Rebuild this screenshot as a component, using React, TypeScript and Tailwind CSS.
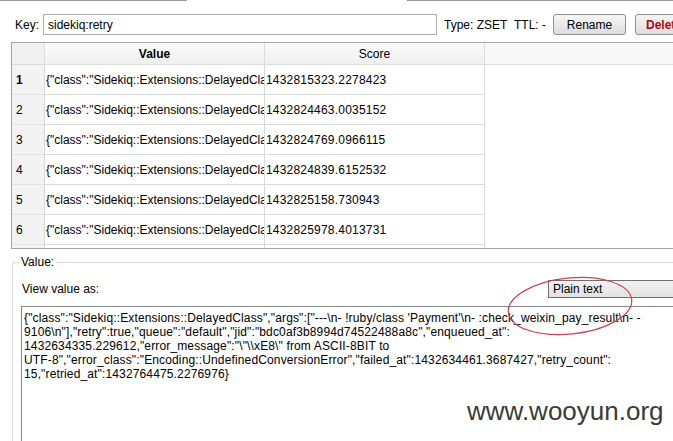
import React from "react";

const rows = [
  { n: "1", v: '{"class":"Sidekiq::Extensions::DelayedClass","args"', s: "1432815323.2278423" },
  { n: "2", v: '{"class":"Sidekiq::Extensions::DelayedClass","args"', s: "1432824463.0035152" },
  { n: "3", v: '{"class":"Sidekiq::Extensions::DelayedClass","args"', s: "1432824769.0966115" },
  { n: "4", v: '{"class":"Sidekiq::Extensions::DelayedClass","args"', s: "1432824839.6152532" },
  { n: "5", v: '{"class":"Sidekiq::Extensions::DelayedClass","args"', s: "1432825158.730943" },
  { n: "6", v: '{"class":"Sidekiq::Extensions::DelayedClass","args"', s: "1432825978.4013731" },
  { n: "7", v: '{"class":"Sidekiq::Extensions::DelayedClass","args"', s: "1432826102.1122334" },
];

const lines = [
  `{"class":"Sidekiq::Extensions::DelayedClass","args":["---\\n- !ruby/class 'Payment'\\n- :check_weixin_pay_result\\n- -`,
  `9106\\n"],"retry":true,"queue":"default","jid":"bdc0af3b8994d74522488a8c","enqueued_at":`,
  `1432634335.229612,"error_message":"\\"\\\\xE8\\" from ASCII-8BIT to`,
  `UTF-8","error_class":"Encoding::UndefinedConversionError","failed_at":1432634461.3687427,"retry_count":`,
  `15,"retried_at":1432764475.2276976}`,
];

export default function App() {
  return (
    <div className="relative w-[673px] h-[441px] overflow-hidden bg-white text-[12px] text-black font-['Liberation_Sans',Arial,sans-serif]">
      {/* top tab frame lines */}
      <div className="flex h-[2px]">
        <div className="w-[187px] border-t border-[#9a9a9a]" />
        <div className="w-[220px]" />
        <div className="flex-1 border-t border-[#9a9a9a]" />
      </div>

      {/* key row */}
      <div className="mt-[12px] flex h-[21px] items-center whitespace-nowrap">
        <div className="w-[43px] shrink-0 pl-[15px]">Key:</div>
        <div className="flex h-[21px] w-[394px] shrink-0 items-center border border-[#abadb3] pl-[4px]">sidekiq:retry</div>
        <div className="ml-[7px] w-[109px] shrink-0">Type: ZSET&nbsp;&nbsp;TTL: -</div>
        <button className="flex h-[21px] w-[73px] shrink-0 items-center justify-center rounded-[3px] border border-[#8e8f8f] bg-gradient-to-b from-[#f6f6f6] to-[#dddddd]">
          Rename
        </button>
        <button className="ml-[9px] flex h-[21px] w-[73px] shrink-0 items-center justify-start rounded-[3px] border border-[#8e8f8f] bg-gradient-to-b from-[#f6f6f6] to-[#dddddd] pl-[10px] font-bold text-[#b1060f]">
          Delete
        </button>
      </div>

      {/* table */}
      <div className="ml-[11px] mt-[7px] h-[207px] overflow-hidden border-l border-t border-b border-[#a5a5a5]">
        <div className="flex h-[22px] border-b border-[#dcdcdc] bg-gradient-to-b from-[#fbfbfb] to-[#f0f0f0]">
          <div className="w-[32px] shrink-0 bg-[#f0f0f0]" />
          <div className="flex w-[220px] shrink-0 items-center justify-center border-l border-[#dcdcdc] font-bold">Value</div>
          <div className="flex w-[220px] shrink-0 items-center justify-center border-l border-[#dcdcdc]">Score</div>
          <div className="flex-1 border-l border-[#dcdcdc] bg-[#f8f8f8]" />
        </div>
        {rows.map((r, i) => (
          <div key={r.n} className="flex h-[30px] whitespace-nowrap">
            <div className={`flex w-[32px] shrink-0 items-center border-b border-[#e2e2e2] bg-[#f3f3f3] pl-[4px] ${i === 0 ? "font-bold" : ""}`}>
              {r.n}
            </div>
            <div className="flex w-[220px] shrink-0 items-center overflow-hidden border-b border-l border-[#d9d9d9] pl-[1px]">
              <span className="block overflow-hidden">{r.v}</span>
            </div>
            <div className="flex w-[220px] shrink-0 items-center overflow-hidden border-b border-l border-[#d9d9d9] pl-[1px] tracking-[0.2px]">
              {r.s}
            </div>
            <div className="flex-1 border-l border-[#d9d9d9]" />
          </div>
        ))}
      </div>

      {/* value group box */}
      <div className="relative ml-[12px] mt-[13px] h-[200px] rounded-tl-[3px] border-l border-t border-[#d5dfe5]">
        <div className="absolute left-[6px] top-[-8px] bg-white px-[2px] leading-[14px]">Value:</div>
        <div className="mt-[17px] flex h-[18px] items-center whitespace-nowrap">
          <div className="w-[535px] shrink-0 pl-[9px]">View value as:</div>
          <div className="flex h-[18px] w-[140px] shrink-0 items-center border border-[#707070] bg-gradient-to-b from-[#f2f2f2] to-[#e2e2e2] pl-[4px]">
            Plain text
          </div>
        </div>
        <div className="ml-[8px] mt-[8px] h-[200px] border-l border-t border-[#828790] pl-[2px] pt-[4px] leading-[14px] tracking-[0.14px] whitespace-nowrap">
          {lines.map((l, i) => (
            <div key={i}>{l}</div>
          ))}
        </div>
      </div>

      {/* red annotation ellipse */}
      <svg className="absolute left-[500px] top-[270px]" width="145" height="75" viewBox="0 0 145 75">
        <ellipse cx="70" cy="36" rx="62" ry="28" transform="rotate(-6 70 36)" fill="none" stroke="#d2414d" strokeWidth="1.2" />
      </svg>

      {/* watermark */}
      <div className="absolute left-[467px] top-[398px] text-[26px] leading-none text-[#3a3a3a] font-['Liberation_Sans',Arial,sans-serif]">
        www.wooyun.org
      </div>
    </div>
  );
}
